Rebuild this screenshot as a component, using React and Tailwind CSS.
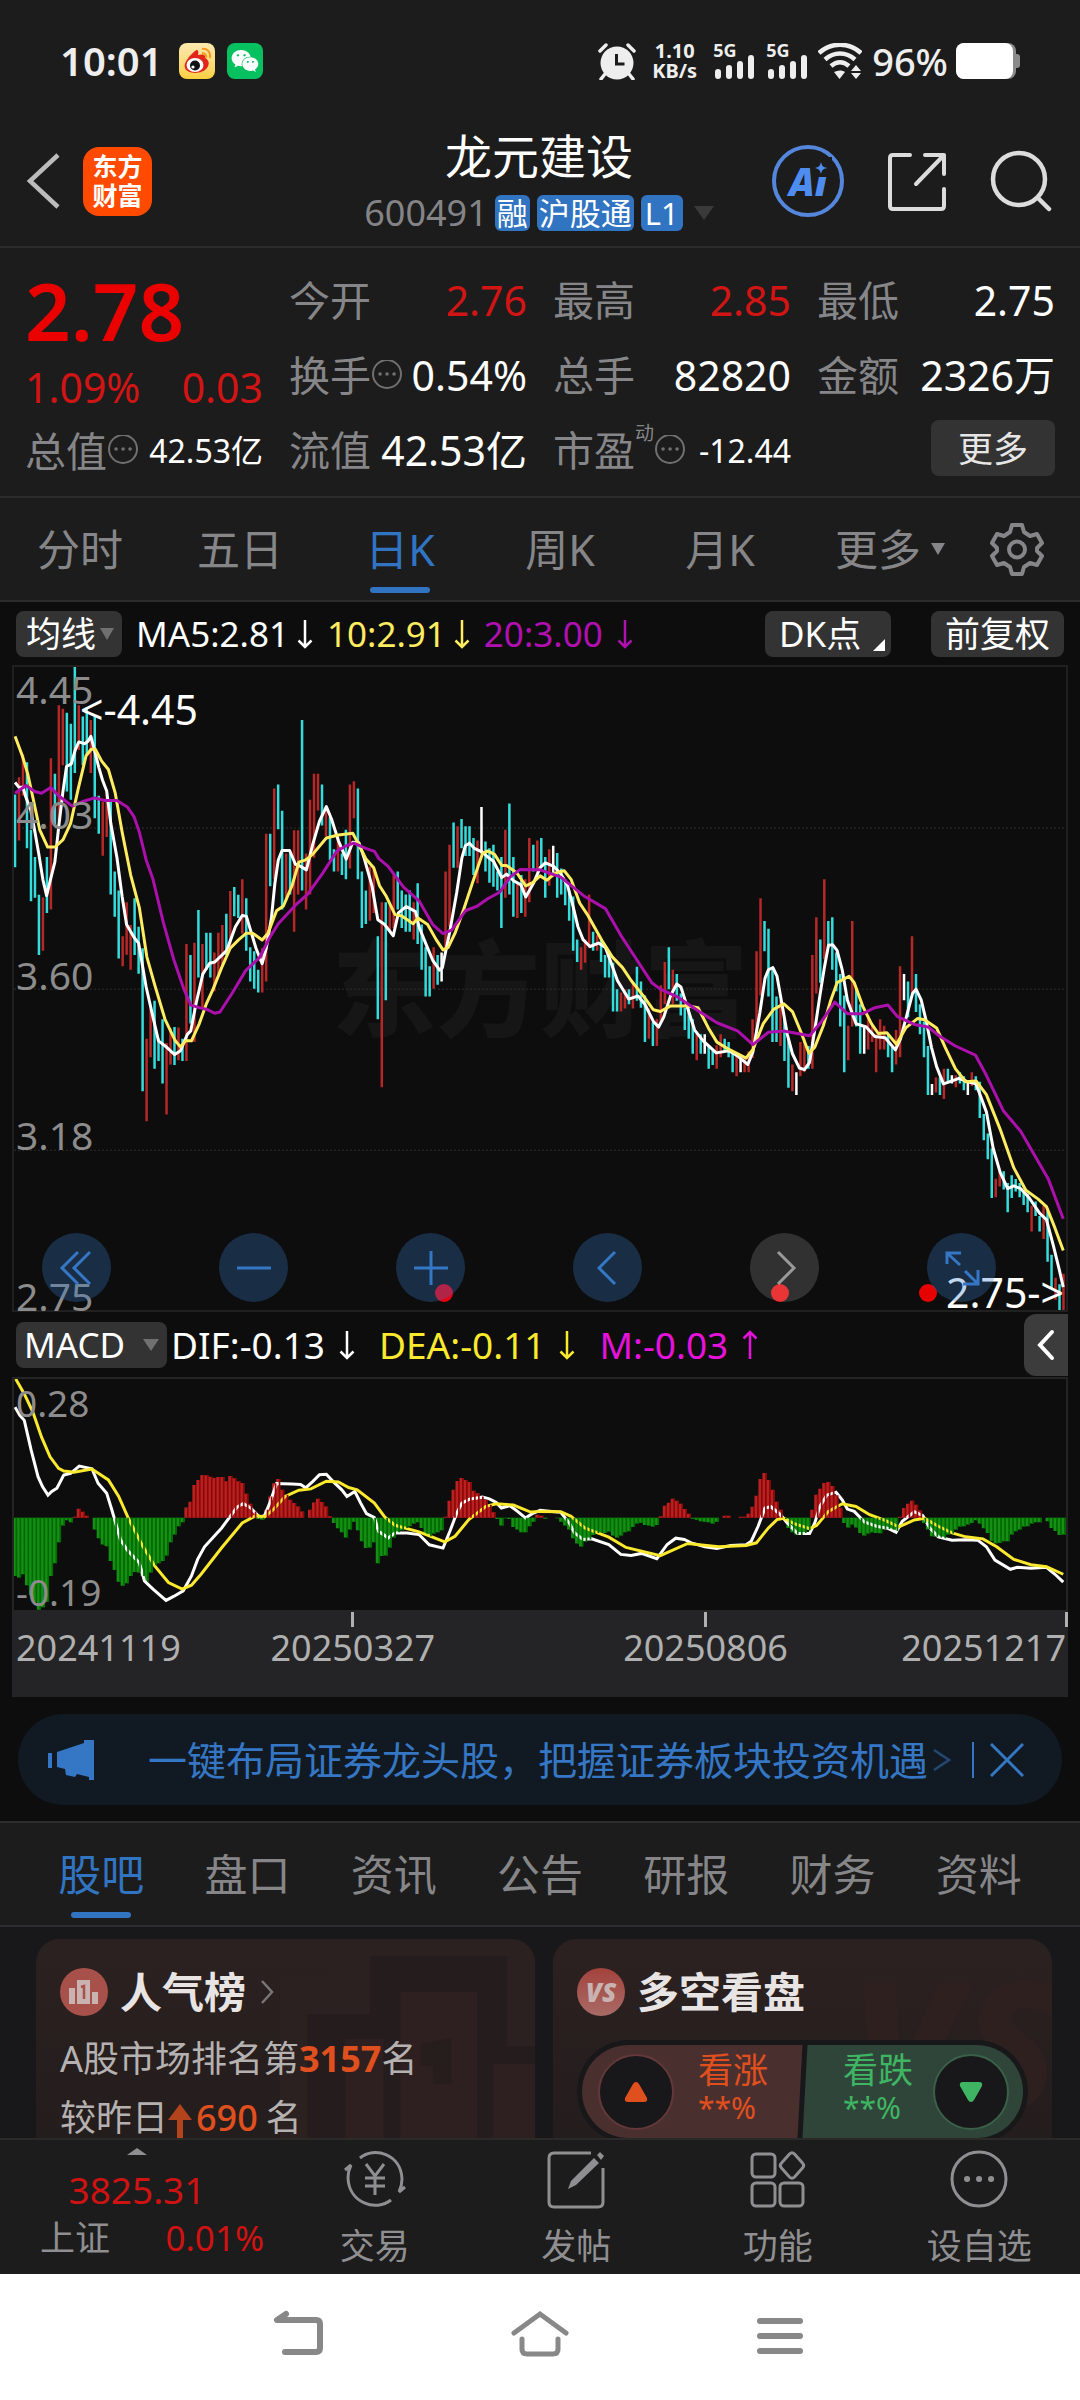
import clsx from "clsx";
import { FaWeixin } from "react-icons/fa";

// One entry per trading day: colour (r up, c down, w flat), high and low on the plot grid.
const CANDLES = `c333-502 r293-440 r240-336 c258-458 c415-581 c478-573 c566-706 r572-696 c478-608 r249-600 c285-405 r126-395
r134-265 c143-326 c169-345 c37-283 r126-230 c152-265 c130-240 r160-283 c150-388 c336-424 r350-475 r330-432
c345-565 c512-617 c556-714 r662-732 r583-705 r636-740 c574-706 c640-749 c690-1022 r900-1092 r830-943 c812-970
c900-952 c855-1004 r910-1076 r875-960 c873-961 r874-950 c900-952 r680-952 c706-865 r677-908 c601-758 r680-830
c654-740 c654-758 r700-790 r654-750 r636-730 c610-706 r557-690 c548-616 c566-620 r530-656 c574-696 c688-767
c697-784 c740-793 r690-793 r424-767 c424-546 r319-530 c310-414 c371-600 r470-580 c470-565 r416-652 r416-565
c160-556 r470-600 r345-565 r285-480 r285-370 c310-405 r365-430 c385-485 c460-512 r425-512 c470-520 c415-530
r310-505 r302-388 c319-530 c512-643 c556-634 r500-626 r500-608 c662-855 r583-1013 c583-811 r590-650 r520-643
c512-600 c556-643 c565-652 c556-652 r583-670 c539-680 c635-740 c688-802 c732-802 r688-784 c706-775 w700-767
r512-700 r450-640 c398-503 r407-503 c390-458 c407-476 c407-476 c434-520 r440-539 w362-470 c442-512 c458-538
c450-547 c512-556 c478-643 r415-573 c354-565 c478-617 r539-620 c520-608 r530-617 r434-583 c450-512 r440-515
c434-500 c478-573 r460-545 w452-515 c469-573 c505-565 c530-590 c556-626 c570-696 c670-722 r688-740 r670-724
r565-690 c652-696 r660-696 c670-722 c706-758 c700-758 c724-837 c785-837 r793-837 r785-830 c785-820 r767-830
c733-812 c767-828 c800-908 r830-900 c862-917 r855-917 r776-860 r722-820 c688-785 r740-820 c750-812 c795-846
c828-880 c830-900 c855-935 r890-950 c890-935 w890-935 c915-970 c925-961 r915-970 r890-943 c900-930 c908-943
c930-978 r940-987 w945-978 r940-978 r930-978 r855-945 r697-910 r574-800 c627-697 c645-802 c735-908 c802-908
r810-917 c850-952 c900-1014 r960-1022 w978-1031 r908-987 r900-978 c917-970 r706-970 r618-795 c670-770 r530-715
c627-690 c618-740 c700-790 c750-872 c800-978 r870-950 r627-872 c785-872 c820-935 w872-935 r846-925 r870-908
r890-978 r855-925 r870-925 c890-943 c917-978 r880-960 r732-943 w750-811 c767-850 r662-795 c750-838 c820-890
c860-943 c917-1031 w1005-1031 r990-1025 c990-1031 r970-1040 c970-1004 w985-1004 r985-1013 c978-1004 c987-1020 w1000-1031
r978-1010 c987-1020 c1000-1084 c1075-1136 c1120-1180 c1155-1270 r1225-1268 r1208-1243 c1208-1250 c1235-1303 c1217-1270 c1226-1255
c1235-1268 c1252-1286 c1260-1303 r1288-1348 c1278-1312 c1312-1348 r1288-1365 c1300-1418 c1402-1480 r1455-1506 c1470-1530 r1446-1530`
  .split(/\s+/)
  .map((entry) => {
    const [high, low] = entry.slice(1).split("-").map(Number);
    return { kind: entry[0], high, low };
  });

const STEP = 11.615;
const FIRST_X = 38;
const candlePath = (kind) =>
  CANDLES.map((c, i) => (c.kind === kind ? `M${(FIRST_X + i * STEP).toFixed(1)} ${c.high}V${c.low}` : "")).join("");

const MA_LINES = [
  {
    color: "#ffffff",
    points:
      "38,305 49,316 61,316 70,340 84,370 96,420 107,470 119,530 130,568 140,535 154,490 165,410 177,330 188,268 202,262 214,228 224,211 240,215 250,210 259,198 270,232 282,270 293,300 305,325 317,400 335,480 350,570 363,635 385,665 398,678 420,780 440,850 456,905 480,920 503,937 520,928 540,890 550,882 565,820 585,750 605,725 620,722 655,695 680,640 700,614 712,616 740,690 758,726 770,690 785,620 795,540 805,485 816,463 838,463 855,495 870,500 887,508 905,450 925,395 945,361 960,390 980,440 1003,483 1022,444 1040,445 1055,480 1078,545 1095,624 1115,635 1140,661 1155,608 1178,593 1205,605 1215,640 1235,680 1255,718 1275,741 1283,735 1305,650 1325,560 1340,480 1350,452 1362,446 1376,458 1400,467 1415,478 1432,488 1456,526 1470,518 1492,534 1512,543 1526,571 1548,540 1568,503 1583,492 1608,500 1628,517 1648,545 1663,590 1678,640 1693,670 1713,686 1738,678 1758,688 1773,720 1793,765 1826,808 1853,801 1873,820 1898,860 1913,873 1928,850 1948,800 1966,773 1978,780 1998,830 2018,880 2043,905 2081,933 2118,928 2143,940 2173,960 2188,930 2208,840 2223,760 2233,740 2246,735 2258,755 2268,800 2288,890 2303,935 2323,968 2338,972 2353,955 2368,880 2383,800 2396,735 2408,683 2420,682 2433,695 2448,740 2463,810 2488,865 2518,873 2543,895 2573,898 2603,926 2618,900 2638,840 2653,795 2663,785 2678,810 2693,860 2708,920 2723,965 2743,1005 2768,998 2788,992 2813,1000 2838,1005 2868,1070 2888,1155 2908,1210 2930,1248 2948,1242 2968,1248 2993,1270 3023,1305 3043,1320 3063,1380 3080,1435 3092,1477",
  },
  {
    color: "#ffec60",
    points:
      "38,198 60,245 75,285 90,340 110,415 133,455 155,455 178,438 200,400 222,320 245,243 260,228 272,228 290,255 310,275 330,330 350,420 375,520 400,595 422,710 445,775 475,855 505,905 520,919 535,905 552,905 575,865 595,820 615,785 640,735 665,690 690,670 712,655 730,655 758,671 775,655 800,603 820,592 845,545 865,490 885,485 905,472 945,434 980,427 1022,423 1040,450 1060,482 1083,503 1100,545 1120,570 1145,612 1165,615 1198,633 1212,620 1240,635 1265,670 1285,694 1300,688 1320,655 1345,600 1370,540 1400,470 1415,464 1435,472 1456,498 1470,498 1500,515 1526,545 1545,538 1568,522 1588,532 1613,515 1638,510 1658,530 1683,585 1708,615 1748,672 1778,710 1808,735 1833,765 1868,800 1898,833 1918,837 1948,824 1998,824 2028,828 2058,875 2083,908 2118,925 2168,945 2188,925 2218,865 2248,832 2278,819 2303,837 2328,885 2351,934 2368,920 2393,870 2413,815 2433,770 2468,755 2483,770 2508,825 2533,865 2553,888 2578,886 2606,913 2633,875 2668,853 2688,856 2723,875 2748,920 2778,970 2808,1000 2838,998 2868,1030 2908,1110 2948,1200 2983,1252 3018,1272 3043,1290 3068,1340 3092,1392",
  },
  {
    color: "#ac10ac",
    points:
      "38,330 70,312 95,326 115,330 142,317 165,336 205,360 240,348 270,341 300,347 335,347 365,362 385,385 400,420 420,485 440,530 470,630 500,715 530,785 550,822 575,828 600,833 620,841 635,838 670,795 710,742 750,712 780,665 805,633 855,590 890,565 935,515 975,465 1000,453 1025,446 1060,458 1085,465 1098,482 1125,500 1170,548 1215,580 1255,635 1285,656 1310,648 1350,603 1385,592 1415,575 1450,560 1480,525 1510,507 1568,508 1628,525 1698,570 1758,598 1803,660 1848,715 1893,770 1918,785 1968,803 2028,835 2083,863 2143,882 2188,914 2233,885 2278,882 2353,893 2388,860 2426,815 2463,842 2508,842 2543,828 2581,822 2608,848 2658,867 2698,873 2733,895 2778,917 2836,938 2868,985 2918,1068 2968,1115 3008,1170 3048,1225 3092,1318",
  },
];

const MACD_ZERO = 624;
const MACD_BARS = [
  800, 805, 795, 828, 858, 878, 902, 895, 878, 800, 762, 698, 648, 632, 638, 621, 597, 606, 618, 624, 660, 686, 705, 710,
  755, 782, 818, 830, 822, 800, 788, 790, 800, 818, 790, 768, 762, 755, 738, 698, 675, 650, 638, 593, 576, 525, 510, 495,
  496, 500, 504, 501, 501, 514, 498, 505, 514, 519, 552, 582, 605, 628, 630, 600, 560, 520, 507, 540, 555, 570, 580, 590,
  605, 624, 600, 578, 567, 577, 590, 620, 640, 656, 668, 684, 660, 636, 662, 695, 716, 714, 698, 762, 740, 738, 714, 684,
  668, 662, 655, 650, 642, 638, 655, 672, 680, 672, 668, 662, 621, 573, 540, 513, 504, 510, 516, 543, 550, 560, 570, 585,
  608, 628, 648, 626, 628, 652, 660, 668, 668, 650, 636, 615, 618, 627, 624, 624, 626, 636, 648, 660, 686, 702, 711, 696,
  690, 676, 670, 668, 670, 666, 678, 684, 678, 668, 665, 652, 642, 639, 646, 648, 651, 646, 620, 588, 579, 567, 573, 582,
  598, 612, 627, 630, 635, 636, 638, 642, 636, 624, 618, 618, 624, 624, 621, 621, 612, 591, 558, 507, 489, 510, 540, 576,
  600, 628, 655, 668, 675, 676, 670, 662, 600, 555, 537, 519, 516, 528, 556, 594, 640, 654, 645, 654, 670, 678, 672, 668,
  670, 671, 660, 658, 660, 664, 621, 595, 582, 573, 585, 602, 640, 660, 680, 682, 684, 686, 675, 672, 660, 651, 650, 645,
  640, 632, 642, 656, 670, 694, 701, 700, 695, 695, 675, 665, 660, 651, 650, 642, 638, 638, 624, 635, 655, 664, 676, 675,
];

const barPath = (positive, offset) =>
  MACD_BARS.map((y, i) => {
    if (y === MACD_ZERO || y < MACD_ZERO !== positive) return "";
    return `M${(FIRST_X + offset + i * STEP).toFixed(1)} ${MACD_ZERO}V${y}`;
  }).join("");

const DIF_POINTS =
  "38,290 52,315 65,330 85,420 105,500 118,530 134,556 145,545 160,535 180,495 200,490 225,468 262,476 280,520 305,550 320,600 345,690 365,722 400,760 415,815 440,840 478,874 500,862 528,845 552,800 570,750 590,712 640,655 665,620 685,592 703,581 725,595 750,622 765,618 780,580 800,521 845,522 870,524 885,534 905,515 925,494 945,493 965,515 990,540 1005,560 1028,545 1045,580 1062,612 1085,624 1097,665 1125,685 1145,670 1180,670 1215,675 1245,706 1285,716 1305,665 1325,610 1340,580 1362,568 1400,562 1420,567 1440,578 1455,595 1480,588 1502,605 1525,625 1545,612 1568,602 1628,608 1653,640 1668,670 1693,690 1718,688 1768,705 1803,735 1833,738 1863,732 1908,748 1938,705 1963,686 1988,690 2008,700 2048,712 2083,717 2123,708 2168,706 2183,695 2203,650 2223,595 2240,591 2268,615 2288,640 2318,672 2353,672 2368,640 2383,590 2403,556 2430,547 2448,570 2463,598 2483,605 2513,637 2548,650 2580,656 2605,668 2623,635 2658,606 2683,618 2703,655 2728,682 2768,692 2808,691 2843,692 2868,712 2893,752 2938,780 2958,774 2998,777 3043,774 3068,795 3092,819";
const DEA_POINTS =
  "40,205 65,250 90,305 115,380 140,440 165,475 180,483 210,487 262,477 310,510 340,560 370,630 410,710 445,770 485,820 525,840 552,828 580,795 640,715 700,640 740,618 765,622 790,600 825,560 865,541 900,537 945,514 980,516 1010,533 1035,540 1085,580 1115,622 1145,647 1215,667 1290,697 1320,680 1360,630 1410,590 1440,582 1490,586 1540,607 1568,605 1628,606 1658,620 1698,655 1768,683 1818,714 1918,739 1998,702 2088,712 2168,708 2198,700 2233,655 2258,630 2278,626 2308,642 2353,657 2373,648 2408,605 2448,582 2488,590 2528,615 2573,632 2613,652 2658,631 2688,626 2728,650 2768,670 2808,682 2858,688 2898,712 2948,750 2998,766 3043,772 3092,795";

const PERIOD_TABS = ["分时", "五日", "日K", "周K", "月K"];
const INFO_TABS = ["股吧", "盘口", "资讯", "公告", "研报", "财务", "资料"];

function Arrow({ up }) {
  return (
    <svg aria-hidden="true" className={clsx("h-8 w-4", up && "rotate-180")} fill="none" stroke="currentColor" strokeWidth="2.500" viewBox="0 0 16 32">
      <path d="M8 2v27M1.500 22.500 8 29l6.500-6.500" />
    </svg>
  );
}

function Triangle({ className }) {
  return (
    <svg aria-hidden="true" className={className} fill="currentColor" preserveAspectRatio="none" viewBox="0 0 20 16">
      <path d="M0 0h20L10 16z" />
    </svg>
  );
}

function MoreDots() {
  return (
    <svg aria-hidden="true" className="h-8 w-8 shrink-0 text-[#707072]" fill="none" stroke="currentColor" viewBox="0 0 32 32">
      <circle cx="16" cy="14" r="14" strokeWidth="2" />
      <path d="M9 14h.1M16 14h.1M23 14h.1" strokeLinecap="round" strokeWidth="3.500" />
    </svg>
  );
}

function SignalBars() {
  return (
    <div className="relative h-9 w-[42px]">
      <span className="block text-[18px] font-bold leading-[14px]">5G</span>
      <svg aria-hidden="true" className="absolute inset-0 h-full w-full" stroke="#eee" strokeLinecap="round" strokeWidth="6" viewBox="0 0 42 36">
        <path d="M5 29v4M16 25v8M27 21v12M38 15v18" />
      </svg>
    </div>
  );
}

function StatusBar() {
  return (
    <div className="flex h-[122px] shrink-0 items-center justify-between px-[60px] text-[#eee]">
      <div className="flex items-center gap-3">
        <span className="mr-1 text-[40px] font-semibold leading-none">10:01</span>
        <span className="flex h-9 w-9 items-center justify-center rounded-lg bg-linear-to-b from-[#fde9b0] to-[#fbd03c]">
          <svg aria-hidden="true" className="h-8 w-8" viewBox="0 0 32 32">
            <path d="M14 6c3-3 4 1 3 4 4-1 8-1 7 3 4 2 5 6 2 10-4 6-19 7-22 0C2 18 9 10 14 6z" fill="#e1251b" />
            <ellipse cx="14" cy="20" fill="#fff" rx="8.500" ry="7" />
            <circle cx="14" cy="20.500" fill="#111" r="5" />
            <circle cx="12" cy="22" fill="#fff" r="1.600" />
            <path d="M21 4c5-1 9 3 8 9M21 8c3 0 5 2 4 5" fill="none" stroke="#f79a1d" strokeWidth="2" />
          </svg>
        </span>
        <span className="flex h-9 w-9 items-center justify-center rounded-lg bg-[#07c160]">
          <FaWeixin aria-hidden="true" className="h-7 w-7 text-white" />
        </span>
      </div>
      <div className="flex items-center">
        <svg aria-hidden="true" className="mr-4 h-[38px] w-[38px]" viewBox="0 0 38 38">
          <circle cx="19" cy="21" fill="#eee" r="16.500" />
          <path d="m2 9 6-6M36 9l-6-6M7 32l-4 5M31 32l4 5" stroke="#eee" strokeLinecap="round" strokeWidth="3.500" />
          <path d="M18.500 12v10h8" fill="none" stroke="#1c1c1c" strokeWidth="3" />
        </svg>
        <div className="mr-4 text-center text-[20px] font-bold leading-5">
          <p>1.10</p>
          <p>KB/s</p>
        </div>
        <div className="flex gap-[11px]">
          <SignalBars />
          <SignalBars />
        </div>
        <svg aria-hidden="true" className="ml-2.5 h-9 w-11" fill="none" stroke="#eee" strokeWidth="4.500" viewBox="0 0 44 36">
          <path d="M1 10c12-11 30-11 42 0M7 16.500c9-8 21-8 30 0M13 23c6-5 12-5 18 0" />
          <path d="M16 29c4-2 8-2 11 0l-5.500 7zM33 28h10l-5-6zM33 30h10l-5 6z" fill="#eee" stroke="none" />
        </svg>
        <span className="ml-2.5 text-[38px] font-medium leading-none">96%</span>
        <svg aria-hidden="true" className="ml-2 h-9 w-16" viewBox="0 0 64 36">
          <rect fill="#8b8b8b" height="36" rx="8" width="60" />
          <rect fill="#8b8b8b" height="14" rx="3" width="8" x="56" y="11" />
          <rect fill="#fff" height="36" rx="8" width="57" />
        </svg>
      </div>
    </div>
  );
}

function Header() {
  return (
    <header className="grid h-[126px] shrink-0 grid-cols-[1fr_auto_1fr] items-center border-b-2 border-[#2c2c2e] pb-1.5 pl-[26px] pr-7">
      <div className="flex items-center gap-[21px]">
        <button aria-label="返回" type="button">
          <svg className="h-14 w-9" fill="none" stroke="#bcbcbc" strokeWidth="4.500" viewBox="0 0 36 56">
            <path d="M32 2 4 28l28 26" />
          </svg>
        </button>
        <a className="flex h-[69px] w-[69px] items-center justify-center rounded-2xl bg-[#ff4a00] text-center text-[25px] font-bold leading-[29px]" href="#home">
          东方
          <br />
          财富
        </a>
      </div>
      <div className="flex flex-col items-center gap-3.5">
        <h1 className="text-[47px] leading-[50px]">龙元建设</h1>
        <div className="flex items-center gap-[7px] leading-none">
          <span className="text-[36px] text-[#848487]">600491</span>
          <span className="rounded-md bg-[#3074c2] px-0.5 text-[31px] leading-9">融</span>
          <span className="rounded-md bg-[#3074c2] px-0.5 text-[31px] leading-9">沪股通</span>
          <span className="rounded-md bg-[#3074c2] px-1 text-[31px] leading-9">L1</span>
          <Triangle className="ml-1 h-3.5 w-5 text-[#3a3a3a]" />
        </div>
      </div>
      <div className="flex items-center justify-end gap-[43px]">
        <button aria-label="Ai" className="relative flex h-[72px] w-[72px] items-center justify-center rounded-full border-4 border-[#5487dc] text-[38px] font-black italic leading-none text-[#4f8cf0]" type="button">
          Ai
          <svg aria-hidden="true" className="absolute right-2 top-2 h-5 w-5" viewBox="0 0 20 20">
            <path d="M0 0h20v20H0z" fill="#1c1c1c" />
            <path d="M9 5c1 4 2 5 6 6-4 1-5 2-6 6-1-4-2-5-6-6 4-1 5-2 6-6z" fill="#4f8cf0" />
          </svg>
        </button>
        <button aria-label="分享" type="button">
          <svg className="h-[60px] w-[60px]" fill="none" stroke="#dcdcdc" strokeLinecap="round" strokeLinejoin="round" strokeWidth="4" viewBox="0 0 60 60">
            <path d="M23 4H6q-3 0-3 3v48q0 3 3 3h48q3 0 3-3V38M38 4h19v19M57 4 29 33" />
          </svg>
        </button>
        <button aria-label="搜索" type="button">
          <svg className="h-[62px] w-[62px]" fill="none" stroke="#dcdcdc" strokeLinecap="round" strokeWidth="4.500" viewBox="0 0 62 62">
            <circle cx="29" cy="29" r="26" />
            <path d="m48 48 11 11" />
          </svg>
        </button>
      </div>
    </header>
  );
}

function Quote({ label, value, tone = "text-white", size = "text-[41px]", hint, mark }) {
  return (
    <div className="flex items-center justify-between whitespace-nowrap leading-none">
      <dt className="flex items-center text-[41px] text-[#868689]">
        {label}
        {mark ? <sup className="-mt-4 text-[19px] leading-none">{mark}</sup> : null}
        {hint ? <MoreDots /> : null}
      </dt>
      <dd className={clsx(size, tone)}>{value}</dd>
    </div>
  );
}

function QuotePanel() {
  return (
    <section className="grid h-[250px] shrink-0 grid-cols-4 gap-x-[26px] border-b-2 border-[#2c2c2e] px-[25px] pt-[15px]">
      <div className="flex flex-col pt-2">
        <p className="text-[80px] font-semibold leading-[78px] text-[#eb0000]">2.78</p>
        <p className="flex justify-between pt-2.5 text-[41px] leading-[56px] text-[#d11414]">
          <span>1.09%</span>
          <span>0.03</span>
        </p>
        <dl className="grid h-[72px]">
          <Quote hint label="总值" size="text-[32px]" value="42.53亿" />
        </dl>
      </div>
      <dl className="grid h-[225px] grid-rows-3">
        <Quote label="今开" tone="text-[#d11414]" value="2.76" />
        <Quote hint label="换手" value="0.54%" />
        <Quote label="流值" value="42.53亿" />
      </dl>
      <dl className="grid h-[225px] grid-rows-3">
        <Quote label="最高" tone="text-[#d11414]" value="2.85" />
        <Quote label="总手" value="82820" />
        <Quote hint label="市盈" mark="动" size="text-[32px]" value="-12.44" />
      </dl>
      <div>
        <dl className="grid h-[150px] grid-rows-2">
          <Quote label="最低" value="2.75" />
          <Quote label="金额" value="2326万" />
        </dl>
        <button className="ml-auto mt-[7px] block h-14 w-[124px] rounded-lg bg-[#333] text-[35px] leading-none text-[#e6e6e6]" type="button">
          更多
        </button>
      </div>
    </section>
  );
}

function PeriodTabs() {
  return (
    <nav className="flex h-[104px] shrink-0 border-b-2 border-[#2c2c2e] text-[43px] leading-none text-[#868689]">
      {PERIOD_TABS.map((tab) => (
        <button className={clsx("relative flex-1", tab === "日K" && "text-[#3074c2]")} key={tab} type="button">
          {tab}
          {tab === "日K" ? <span className="absolute bottom-[7px] left-1/2 h-1.5 w-[60px] -translate-x-1/2 rounded-full bg-[#3074c2]" /> : null}
        </button>
      ))}
      <button className="flex w-[180px] items-center justify-center gap-2.5" type="button">
        更多
        <Triangle className="h-3 w-3.5" />
      </button>
      <button aria-label="设置" className="flex w-[100px] items-center pl-2.5" type="button">
        <svg className="h-[54px] w-[54px]" fill="none" stroke="currentColor" strokeLinejoin="round" strokeWidth="4" viewBox="0 0 54 54">
          <path d="M22 3h10l2 7 6 4 7-2 5 9-5 5v3l5 5-5 9-7-2-6 4-2 7H22l-2-7-6-4-7 2-5-9 5-5v-3l-5-5 5-9 7 2 6-4z" />
          <circle cx="27" cy="27.500" r="8" />
        </svg>
      </button>
    </nav>
  );
}

function RoundButton({ label, muted, children }) {
  return (
    <button
      aria-label={label}
      className={clsx(
        "flex h-[69px] w-[69px] items-center justify-center rounded-full",
        muted ? "bg-white/15 text-[#999]" : "bg-[#3577c4]/30 text-[#3577c4]"
      )}
      type="button"
    >
      <svg className="h-9 w-9" fill="none" stroke="currentColor" strokeWidth="3" viewBox="0 0 36 36">
        {children}
      </svg>
    </button>
  );
}

function CandleChart() {
  return (
    <div className="relative mx-3 h-[647px] border-2 border-[#202020]">
      <p aria-hidden="true" className="absolute inset-0 flex items-center justify-center text-[104px] font-black leading-none text-[#161616]">
        东方财富
      </p>
      <svg aria-label="日K线图" className="absolute inset-0 h-full w-full" fill="none" preserveAspectRatio="none" role="img" viewBox="35 37 3065 1493">
        <g stroke="#2e2e2e" strokeDasharray="2 2" strokeWidth="1">
          {[411, 785, 1159].map((y) => (
            <path d={`M35 ${y}H3100`} key={y} vectorEffect="non-scaling-stroke" />
          ))}
        </g>
        <g strokeWidth="2.500">
          <path d={candlePath("r")} stroke="#b62828" vectorEffect="non-scaling-stroke" />
          <path d={candlePath("c")} stroke="#35dcdc" vectorEffect="non-scaling-stroke" />
          <path d={candlePath("w")} stroke="#fff" vectorEffect="non-scaling-stroke" />
        </g>
        {MA_LINES.map((line) => (
          <polyline key={line.color} points={line.points} stroke={line.color} strokeLinejoin="round" strokeWidth="3" vectorEffect="non-scaling-stroke" />
        ))}
      </svg>
      <div className="absolute inset-0 grid grid-rows-4 pl-0.5 text-[39px] leading-7 text-[#8c8c8c]">
        <div className="flex flex-col justify-between pt-2">
          <span>4.45</span>
          <span>4.03</span>
        </div>
        <span className="self-end">3.60</span>
        <span className="self-end">3.18</span>
        <span className="self-end">2.75</span>
      </div>
      <span className="absolute left-[66px] top-6 text-[41px] leading-9">&lt;-4.45</span>
      <span className="absolute bottom-0 right-0.5 text-[41px] leading-9">2.75-&gt;</span>
      <span className="absolute bottom-2 left-[40%] h-[18px] w-[18px] rounded-full bg-[#e60012]" />
      <span className="absolute bottom-2 left-[72%] h-[18px] w-[18px] rounded-full bg-[#e61212]" />
      <span className="absolute bottom-2 left-[86%] h-[18px] w-[18px] rounded-full bg-[#e60000]" />
      <div className="absolute bottom-2 left-7 right-[70px] flex justify-between">
        <RoundButton label="最早">
          <path d="M19 2 3 18l16 16M31 2 15 18l16 16" />
        </RoundButton>
        <RoundButton label="缩小">
          <path d="M1 18h34" />
        </RoundButton>
        <RoundButton label="放大">
          <path d="M1 18h34M18 1v34" />
        </RoundButton>
        <RoundButton label="左移">
          <path d="M25 2 9 18l16 16" />
        </RoundButton>
        <RoundButton label="右移" muted>
          <path d="m11 2 16 16-16 16" />
        </RoundButton>
        <RoundButton label="全屏">
          <path d="M3 14V3h14M3 3l13 12M21 21l12 12M19 34h15V20" />
        </RoundButton>
      </div>
    </div>
  );
}

function MacdChart() {
  return (
    <div className="relative mx-3 h-[235px] border-2 border-[#242424]">
      <svg aria-label="MACD" className="absolute inset-0 h-full w-full" fill="none" preserveAspectRatio="none" role="img" viewBox="35 205 3065 698">
        <path d={barPath(true, 0)} stroke="#b82222" strokeWidth="12" />
        <path d={barPath(false, 0)} stroke="#159015" strokeWidth="12" />
        <polyline points={DIF_POINTS} stroke="#fff" strokeWidth="3" vectorEffect="non-scaling-stroke" />
        <polyline points={DEA_POINTS} stroke="#fbe92e" strokeWidth="3" vectorEffect="non-scaling-stroke" />
        {/* darker half of every bar, drawn over the lines */}
        <path d={barPath(true, 4)} stroke="#8c0808" strokeWidth="5" />
        <path d={barPath(false, 4)} stroke="#006a00" strokeWidth="5" />
      </svg>
      <div className="absolute inset-0 flex flex-col justify-between pb-0.5 pl-0.5 pt-2 text-[37px] leading-8 text-[#8c8c8c]">
        <span>0.28</span>
        <span>-0.19</span>
      </div>
    </div>
  );
}

function DateAxis() {
  const tick = "h-[15px] w-[3px] bg-[#b0b0b0]";
  return (
    <div className="mx-3 grid h-[85px] grid-cols-[254fr_352fr_444fr] bg-[#242426] pl-1 text-[36px] leading-none text-[#b0b0b0]">
      <span className="pt-[18px]">20241119</span>
      <div className="flex flex-col items-start">
        <div className="flex flex-col items-center gap-[3px]">
          <span className={tick} />
          <span>20250327</span>
        </div>
      </div>
      <div className="flex items-start justify-between">
        <div className="flex flex-col items-center gap-[3px]">
          <span className={tick} />
          <span>20250806</span>
        </div>
        <div className="flex flex-col items-end gap-[3px]">
          <span className={tick} />
          <span className="pr-0.5">20251217</span>
        </div>
      </div>
    </div>
  );
}

function ChartSection() {
  const chip = "flex h-[46px] items-center rounded-lg bg-[#333] text-[35px]";
  return (
    <section className="shrink-0 bg-[#0d0d0d]">
      <div className="flex h-[63px] items-center px-4 text-[35px] leading-none">
        <button className={clsx(chip, "gap-1 pl-2.5 pr-2")} type="button">
          均线
          <Triangle className="h-3 w-3.5 text-[#707070]" />
        </button>
        <span className="ml-3.5 mr-2">MA5:2.81</span>
        <Arrow />
        <span className="ml-3.5 mr-2 text-[#ffec60]">10:2.91</span>
        <span className="text-[#ffec60]">
          <Arrow />
        </span>
        <span className="ml-3.5 mr-3.5 text-[#b010b0]">20:3.00</span>
        <span className="text-[#b010b0]">
          <Arrow />
        </span>
        <button className={clsx(chip, "relative ml-auto w-[126px] pl-3.5")} type="button">
          DK点
          <svg aria-hidden="true" className="absolute bottom-1.5 right-1.5 h-3 w-3" viewBox="0 0 12 12">
            <path d="M12 0v12H0z" fill="#fff" />
          </svg>
        </button>
        <button className={clsx(chip, "ml-10 px-3.5")} type="button">
          前复权
        </button>
      </div>
      <CandleChart />
      <div className="flex h-[65px] items-center pl-4 pr-3 text-[37px] leading-none">
        <button className={clsx(chip, "w-[151px] justify-between px-2")} type="button">
          MACD
          <Triangle className="h-3 w-4 text-[#707070]" />
        </button>
        <span className="ml-1 mr-3.5">DIF:-0.13</span>
        <Arrow />
        <span className="ml-6 mr-3.5 text-[#fbe92e]">DEA:-0.11</span>
        <span className="text-[#fbe92e]">
          <Arrow />
        </span>
        <span className="ml-6 mr-3.5 text-[#e612dc]">M:-0.03</span>
        <span className="text-[#e612dc]">
          <Arrow up />
        </span>
        <button aria-label="展开" className="ml-auto flex h-[62px] w-11 items-center justify-center rounded-l-xl bg-[#3c3c3c]" type="button">
          <svg className="h-8 w-5" fill="none" stroke="#fff" strokeLinecap="round" strokeWidth="4" viewBox="0 0 20 32">
            <path d="M16 3 4 16l12 13" />
          </svg>
        </button>
      </div>
      <MacdChart />
      <DateAxis />
      <div className="px-[18px] pb-4 pt-[17px]">
        <div className="flex h-[91px] items-center rounded-full bg-[#111a23] pl-[30px] pr-[38px] text-[#3577c4]">
          <svg aria-hidden="true" className="h-10 w-[46px]" fill="currentColor" viewBox="0 0 46 40">
            <path d="M0 13h4v15H0zM9 12 36 3V0h10v40h-5v-3l-12-3-2 3-9-2-1-6-8-2z" />
          </svg>
          <a className="ml-[54px] whitespace-nowrap text-[39px] leading-none" href="#promo">
            一键布局证券龙头股，把握证券板块投资机遇
          </a>
          <svg aria-hidden="true" className="ml-1 h-6 w-5 opacity-50" fill="none" stroke="currentColor" strokeWidth="2.500" viewBox="0 0 20 24">
            <path d="m2 2 15 10L2 22" />
          </svg>
          <span className="ml-auto h-9 w-0.5 bg-[#3577c4]" />
          <button aria-label="关闭" className="ml-4" type="button">
            <svg className="h-[34px] w-[34px]" fill="none" stroke="currentColor" strokeWidth="3" viewBox="0 0 34 34">
              <path d="m1 1 32 32M33 1 1 33" />
            </svg>
          </button>
        </div>
      </div>
    </section>
  );
}

function InfoTabs() {
  return (
    <nav className="flex h-[106px] shrink-0 border-y-2 border-[#2e2e30] px-7 text-[43px] leading-none text-[#868689]">
      {INFO_TABS.map((tab, index) => (
        <button className={clsx("relative flex-1", index === 0 && "text-[#3074c2]")} key={tab} type="button">
          {tab}
          {index === 0 ? <span className="absolute bottom-[7px] left-1/2 h-1.5 w-[60px] -translate-x-1/2 rounded-full bg-[#3074c2]" /> : null}
        </button>
      ))}
    </nav>
  );
}

function Cards() {
  const card = "relative h-[260px] overflow-hidden rounded-t-3xl bg-linear-to-b from-[#2b2120] to-[#221c1c] px-6 pt-[29px]";
  return (
    <section className="grid min-h-0 flex-1 grid-cols-2 gap-[18px] overflow-hidden bg-[#18181a] pl-9 pr-7 pt-3 leading-none">
      <article className={card}>
        <svg aria-hidden="true" className="absolute inset-0 h-full w-full" preserveAspectRatio="none" viewBox="0 0 500 260">
          <path d="M244 38h54V0h202v260H244z" fill="#2a2120" />
          <path d="M272 75h63V17h137v90h28v153H272z" fill="#251d1d" />
          <path d="M365 53h77v207h-77zM310 100h38v160h-38zM458 125h42v135h-42z" fill="#2e2020" />
          <path d="m386 105 30-6v46h-18v-18h-12z" fill="#261d1d" />
        </svg>
        <div className="relative">
          <h2 className="flex h-12 items-center text-[42px] font-semibold text-[#e8e4e4]">
            <svg aria-hidden="true" className="mr-3 h-12 w-12" viewBox="0 0 48 48">
              <circle cx="24" cy="24" fill="#a8504a" r="24" />
              <path d="M9 20h6v16H9zM17 12h13v24H17zM32 24h6v12h-6z" fill="#c9b3b1" />
              <path d="m21 19 3-1v13" fill="none" stroke="#a8504a" strokeWidth="2.500" />
            </svg>
            人气榜
            <svg aria-hidden="true" className="ml-3.5 h-6 w-3.5" fill="none" stroke="#777" strokeWidth="2.500" viewBox="0 0 14 24">
              <path d="m2 1 10 11L2 23" />
            </svg>
          </h2>
          <p className="mt-[25px] text-[36px] text-[#b5b1b1]">
            A股市场排名第<b className="text-[#e0501f]">3157</b>名
          </p>
          <p className="mt-[19px] flex items-center text-[36px] text-[#b5b1b1]">
            较昨日
            <svg aria-hidden="true" className="mt-2 h-9 w-6" fill="#b3431b" viewBox="0 0 24 36">
              <path d="M12 0 24 16h-9v20H9V16H0z" />
            </svg>
            <b className="ml-1 mr-2 font-medium text-[#e0501f]">690</b>名
          </p>
        </div>
      </article>
      <article className={card}>
        <p aria-hidden="true" className="absolute -right-2 top-3 text-[180px] font-black italic leading-none text-[#2f2020]">
          VS
        </p>
        <div className="relative">
          <h2 className="flex h-12 items-center text-[42px] font-semibold text-[#e8e4e4]">
            <span className="mr-3 flex h-12 w-12 items-center justify-center rounded-full bg-linear-to-b from-[#a3423d] to-[#a86a66] text-[26px] font-black italic text-[#c9b3b1]">
              VS
            </span>
            多空看盘
          </h2>
          <div className="mt-6 h-[103px] rounded-full bg-[#18181a] p-[5px]">
            <div className="relative flex h-full overflow-hidden rounded-full">
              <svg aria-hidden="true" className="absolute inset-0 h-full w-full" preserveAspectRatio="none" viewBox="0 0 442 93">
                <path d="M0 0h221l-5 93H0z" fill="#492f2e" />
                <path d="M226 0h216v93H221z" fill="#2f4539" />
              </svg>
              <button className="relative flex flex-1 items-center gap-6 pl-4 text-left text-[#e0501f]" type="button">
                <span className="flex h-[76px] w-[76px] items-center justify-center rounded-full border-2 border-[#63383a] bg-[#18181a]">
                  <svg aria-hidden="true" className="h-5 w-6" fill="currentColor" viewBox="0 0 24 20">
                    <path d="M12 0q2 0 3 2l8 14q1 4-3 4H4q-4 0-3-4L9 2q1-2 3-2z" />
                  </svg>
                </span>
                <span className="flex flex-col pb-2 text-[35px] leading-10">
                  看涨
                  <span className="text-[30px] leading-9">**%</span>
                </span>
              </button>
              <button className="relative flex flex-1 items-center justify-end gap-5 pr-3.5 text-left text-[#3fb563]" type="button">
                <span className="flex flex-col pb-2 text-[35px] leading-10">
                  看跌
                  <span className="text-[30px] leading-9">**%</span>
                </span>
                <span className="flex h-[76px] w-[76px] items-center justify-center rounded-full border-2 border-[#3a6048] bg-[#18181a]">
                  <svg aria-hidden="true" className="h-5 w-6 rotate-180" fill="currentColor" viewBox="0 0 24 20">
                    <path d="M12 0q2 0 3 2l8 14q1 4-3 4H4q-4 0-3-4L9 2q1-2 3-2z" />
                  </svg>
                </span>
              </button>
            </div>
          </div>
        </div>
      </article>
    </section>
  );
}

function BarItem({ label, children }) {
  return (
    <a className="flex flex-1 flex-col items-center gap-[18px] pt-2 text-[35px]" href="#action">
      <svg aria-hidden="true" className="h-[62px] w-[66px]" fill="none" stroke="currentColor" strokeWidth="3" viewBox="0 0 66 62">
        {children}
      </svg>
      {label}
    </a>
  );
}

function BottomBar() {
  return (
    <footer className="flex h-[136px] shrink-0 border-t-2 border-[#2a2a2a] leading-none text-[#8f8f92]">
      <a className="flex w-[274px] flex-col items-center pt-2" href="#index">
        <Triangle className="h-[7px] w-5 rotate-180" />
        <span className="mt-4 text-[37px] text-[#cf1212]">3825.31</span>
        <span className="mt-3 flex w-full justify-between pl-10 pr-2.5 text-[35px]">
          上证
          <span className="text-[#cf1212]">0.01%</span>
        </span>
      </a>
      <BarItem label="交易">
        <path d="M18 10C32-2 59 6 60 31c0 5-1 9-3 13l6-5M49 52C34 64 7 55 6 30c0-5 1-9 3-13l-6 5" />
        <path d="m24 16 9 12 9-12M33 28v19M23 30h20M23 38h20" />
      </BarItem>
      <BarItem label="发帖">
        <path d="M48 5H11q-5 0-5 5v44q0 5 5 5h44q5 0 5-5V20" />
        <path d="m25 41 3-8 23-23 5 5-23 22zM54 7l3-3 4 4-3 4z" fill="currentColor" stroke="none" />
      </BarItem>
      <BarItem label="功能">
        <rect height="23" rx="4" width="23" x="7" y="6" />
        <rect height="23" rx="4" width="23" x="7" y="35" />
        <rect height="23" rx="4" width="23" x="35" y="35" />
        <path d="M44.500 6q2.500-2.500 5 0l8 9q2.500 2.500 0 5l-8 9q-2.500 2.500-5 0l-8-9q-2.500-2.500 0-5z" />
      </BarItem>
      <BarItem label="设自选">
        <circle cx="33" cy="31" r="27" />
        <path d="M21 31h.1M33 31h.1M45 31h.1" strokeLinecap="round" strokeWidth="6" />
      </BarItem>
    </footer>
  );
}

function SystemNav() {
  const icon = "h-[52px] w-[60px]";
  return (
    <nav className="grid h-[126px] shrink-0 grid-cols-3 bg-white px-[180px] pb-1">
      <button aria-label="返回上一级" className="flex items-center justify-center" type="button">
        <svg className={icon} fill="none" stroke="#888" strokeLinecap="round" strokeWidth="6" viewBox="0 0 60 52">
          <path d="m16 5-9 6h39q4 0 4 4v24q0 4-4 4H15" strokeLinejoin="round" />
        </svg>
      </button>
      <button aria-label="主屏幕" className="flex items-center justify-center" type="button">
        <svg className={icon} fill="none" stroke="#888" strokeLinecap="round" strokeWidth="5" viewBox="0 0 60 52">
          <path d="M4 24 30 5l26 19M12 30v10q0 5 5 5h26q5 0 5-5V30" />
        </svg>
      </button>
      <button aria-label="最近任务" className="flex items-center justify-center" type="button">
        <svg className={icon} fill="none" stroke="#888" strokeLinecap="round" strokeWidth="6" viewBox="0 0 60 52">
          <path d="M10 12h40M10 27h40M10 42h40" />
        </svg>
      </button>
    </nav>
  );
}

function App() {
  return (
    <main className="flex h-screen flex-col overflow-hidden bg-[#1c1c1c] font-['Noto_Sans','Noto_Sans_CJK_SC',sans-serif] text-white">
      <StatusBar />
      <Header />
      <QuotePanel />
      <PeriodTabs />
      <ChartSection />
      <InfoTabs />
      <Cards />
      <BottomBar />
      <SystemNav />
    </main>
  );
}

export default App;
